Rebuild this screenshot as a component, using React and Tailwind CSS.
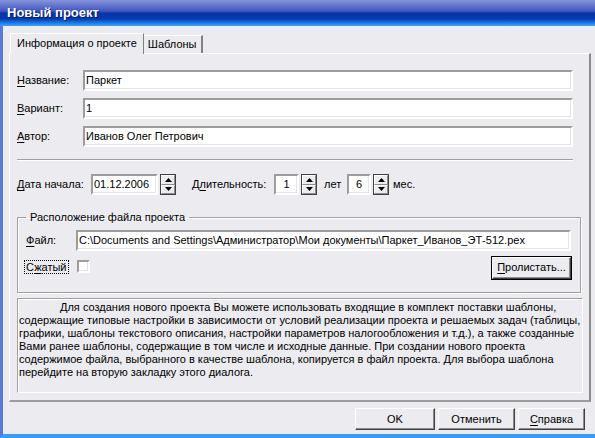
import React from 'react';

const sunken =
  'border-2 border-t-[#9c9c9c] border-l-[#9c9c9c] border-r-white border-b-white bg-white shadow-[inset_-1px_-1px_0_#e4e3e6]';
const raised =
  'border border-t-white border-l-white border-r-[#404040] border-b-[#404040] shadow-[inset_-1px_-1px_0_#8c8c8c] bg-[#ecebef]';

const Mn = ({ children }) => <span className="underline underline-offset-[2px]">{children}</span>;

function Field({ label, value, top }) {
  return (
    <div className={`flex items-center ${top}`}>
      <div className="w-[73px] pl-[7px]">{label}</div>
      <div className={`${sunken} h-[21px] w-[490px] pl-[1px] leading-[17px]`}>{value}</div>
    </div>
  );
}

function Arrow({ up }) {
  return (
    <svg width="7" height="4" viewBox="0 0 7 4">
      {up ? <path d="M3.5 0 L7 4 L0 4 Z" fill="#000" /> : <path d="M0 0 L7 0 L3.5 4 Z" fill="#000" />}
    </svg>
  );
}

function Spin() {
  return (
    <div className="ml-[2px] flex h-[21px] w-[16px] flex-col border border-[#404040]">
      <div className="flex flex-1 items-center justify-center border-t border-l border-white border-b border-b-[#8c8c8c] border-r border-r-[#8c8c8c]">
        <Arrow up />
      </div>
      <div className="flex flex-1 items-center justify-center border-t border-l border-white border-b border-b-[#8c8c8c] border-r border-r-[#8c8c8c]">
        <Arrow />
      </div>
    </div>
  );
}

const descLines = [
  'Для создания нового проекта Вы можете использовать входящие в комплект поставки шаблоны,',
  'содержащие типовые настройки в зависимости от условий реализации проекта и решаемых задач (таблицы,',
  'графики, шаблоны текстового описания, настройки параметров налогообложения и т.д.), а также созданные',
  'Вами ранее шаблоны, содержащие в том числе и исходные данные. При создании нового проекта',
  'содержимое файла, выбранного в качестве шаблона, копируется в файл проекта. Для выбора шаблона',
  'перейдите на вторую закладку этого диалога.',
];

export default function App() {
  return (
    <div className="flex h-[438px] w-[595px] flex-col overflow-hidden bg-[#ecebef] font-['Liberation_Sans',Arial,sans-serif] text-[11px] text-black">
      {/* Title bar */}
      <div className="flex h-[26px] shrink-0 items-center bg-[linear-gradient(to_bottom,#8593da_0%,#5668c8_30%,#3b52bf_44%,#0834a6_50%,#0638ad_72%,#1b7ae8_88%,#3aa4f6_100%)] pl-[7px]">
        <span className="text-[13px] font-bold text-white [text-shadow:1px_1px_0_#0a1a60]">Новый проект</span>
      </div>

      {/* Window body */}
      <div className="flex flex-1 flex-col border-l-[3px] border-b-[4px] border-l-[#5a78d8] border-b-[#3a9cf0]">
        {/* Tabs */}
        <div className="ml-[7px] mt-[6px] flex h-[21px] items-end">
          <div className="relative z-10 -mb-px flex h-[21px] items-center border-t border-l border-white border-r border-r-[#808080] bg-[#ecebef] px-[6px] pb-[2px]">
            Информация о проекте
          </div>
          <div className="flex h-[18px] items-center border-t border-white border-r-2 border-r-[#808080] px-[4px]">
            Шаблоны
          </div>
        </div>

        {/* Tab panel */}
        <div className="ml-[6px] flex h-[349px] w-[582px] flex-col border-t border-l border-white border-r-2 border-b-2 border-r-[#8c8c8c] border-b-[#9c9c9c]">
          <Field label={<><Mn>Н</Mn>азвание:</>} value="Паркет" top="mt-[16px]" />
          <Field label={<><Mn>В</Mn>ариант:</>} value="1" top="mt-[7px]" />
          <Field label={<><Mn>А</Mn>втор:</>} value="Иванов Олег Петрович" top="mt-[7px]" />

          <div className="ml-[7px] mt-[12px] h-[2px] w-[556px] border-t border-t-[#a0a0a0] border-b border-b-white" />

          {/* Dates */}
          <div className="mt-[13px] flex h-[21px] items-center pl-[7px]">
            <span className="w-[74px]"><Mn>Д</Mn>ата начала:</span>
            <div className={`${sunken} h-[21px] w-[67px] pl-[1px] leading-[17px]`}>01.12.2006</div>
            <Spin />
            <span className="ml-[16px] w-[82px]">Д<Mn>л</Mn>ительность:</span>
            <div className={`${sunken} h-[21px] w-[25px] text-center leading-[17px]`}>1</div>
            <Spin />
            <span className="ml-[7px] w-[23px]">лет</span>
            <div className={`${sunken} h-[21px] w-[24px] text-center leading-[17px]`}>6</div>
            <Spin />
            <span className="ml-[4px]">мес.</span>
          </div>

          {/* File location group */}
          <fieldset className="ml-[7px] mt-[14px] h-[84px] w-[564px] border border-[#a0a0a0] shadow-[1px_1px_0_#fff,inset_1px_1px_0_#fff]">
            <legend className="ml-[8px] px-[4px]">Расположение файла проекта</legend>
            <div className="mt-[4px] flex items-center">
              <span className="w-[58px] pl-[8px]"><Mn>Ф</Mn>айл:</span>
              <div className={`${sunken} h-[21px] w-[495px] pl-[1px] leading-[17px]`}>
                C:\Documents and Settings\Администратор\Мои документы\Паркет_Иванов_ЭТ-512.pex
              </div>
            </div>
            <div className="mt-[5px] flex items-start">
              <span className="ml-[6px] mt-[4px] border border-dotted border-black px-[1px] leading-[12px]">
                С<Mn>ж</Mn>атый
              </span>
              <div className={`ml-[8px] mt-[4px] h-[13px] w-[13px] ${sunken}`} />
              <div className="ml-auto mr-[8px] border border-black">
                <div className={`${raised} flex h-[22px] w-[79px] items-center justify-center`}>
                  <span><Mn>П</Mn>ролистать...</span>
                </div>
              </div>
            </div>
          </fieldset>

          {/* Description */}
          <div className="ml-[7px] mt-[5px] h-[95px] w-[566px] overflow-hidden border border-t-[#a0a0a0] border-l-[#a0a0a0] border-r-white border-b-white pl-[1px] pt-[2px] leading-[13px] shadow-[inset_1px_1px_0_#fff]">
            {descLines.map((l, i) => (
              <div key={i} className={`whitespace-nowrap ${i === 0 ? 'pl-[41px]' : ''}`}>{l}</div>
            ))}
          </div>
        </div>

        {/* Buttons */}
        <div className="mt-[6px] flex gap-[3px] pl-[352px]">
          <div className={`${raised} flex h-[22px] w-[80px] items-center justify-center`}>OK</div>
          <div className={`${raised} flex h-[22px] w-[77px] items-center justify-center`}>Отменить</div>
          <div className={`${raised} flex h-[22px] w-[67px] items-center justify-center`}>
            <span><Mn>С</Mn>правка</span>
          </div>
        </div>
      </div>
    </div>
  );
}
